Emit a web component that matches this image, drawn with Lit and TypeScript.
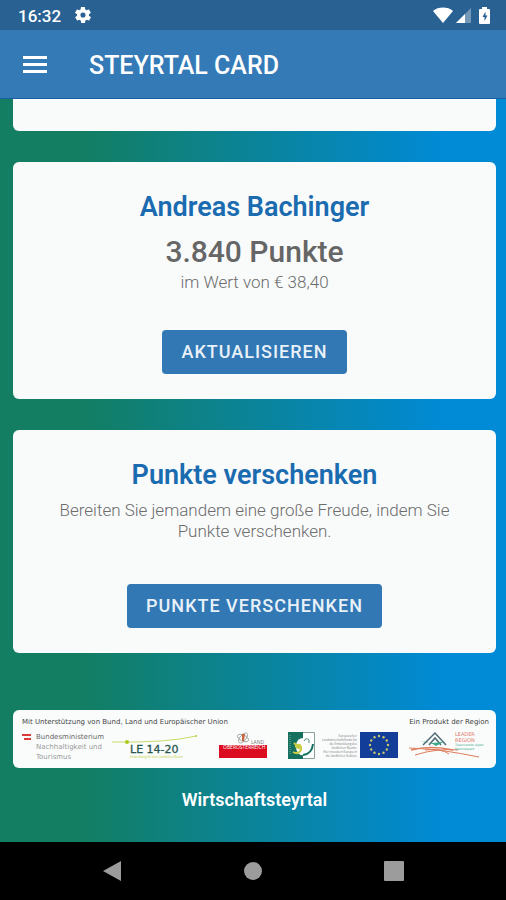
import { LitElement, html, svg, css } from "lit";
import { customElement } from "lit/decorators.js";

@customElement("status-bar")
class StatusBar extends LitElement {
  static styles = css`
    :host {
      display: flex;
      align-items: center;
      height: 30px;
      padding: 0 16px 0 18px;
      background: #286192;
      color: #fff;
      font: 500 17px/30px Roboto, sans-serif;
    }
    .time { padding-top: 2px; }
    .gear { margin-left: 14px; }
    .right { display: flex; align-items: center; margin-left: auto; }
    svg { display: block; }
    .battery { margin-left: 8px; }
    .signal { margin-left: 3px; }
  `;
  render() {
    return html`
      <span class="time">16:32</span>
      <svg class="gear" width="16" height="16" viewBox="2 2 20 20" fill="#fff">
        <path d="M19.4 13c0-.3.1-.6.1-1s0-.7-.1-1l2.1-1.600c.2-.2.3-.4.1-.6l-2-3.500c-.1-.2-.4-.3-.6-.2l-2.500 1c-.5-.4-1.100-.7-1.700-1l-.4-2.600c0-.3-.2-.5-.5-.5h-4c-.3 0-.5.2-.5.5l-.4 2.600c-.6.3-1.200.6-1.700 1l-2.500-1c-.2-.1-.5 0-.6.2l-2 3.500c-.1.2-.1.5.1.6L4.600 11c0 .3-.1.7-.1 1s0 .7.1 1l-2.100 1.600c-.2.2-.3.4-.1.600l2 3.500c.1.200.4.300.6.200l2.500-1c.5.400 1.100.7 1.700 1l.4 2.600c0 .3.200.5.5.5h4c.3 0 .5-.2.5-.5l.4-2.600c.6-.3 1.200-.6 1.700-1l2.500 1c.2.100.5 0 .6-.2l2-3.500c.1-.2.1-.5-.1-.6L19.400 13zM12 15.200a3.200 3.200 0 1 1 0-6.400 3.200 3.200 0 0 1 0 6.400z" />
      </svg>
      <span class="right">
        <svg width="20" height="16" viewBox="0 0 20 16" fill="#fff">
          <path d="M0 4C5-.6 15-.6 20 4L10 16z" />
        </svg>
        <svg class="signal" width="15" height="15" viewBox="0 0 15 15" fill="#fff">
          <path d="M15 0V15H0z" opacity=".35" />
          <path d="M9 6V15H0z" />
        </svg>
        <svg class="battery" width="11" height="17" viewBox="0 0 11 17">
          <path d="M3 0h5v2h2q1 0 1 1v13q0 1-1 1H1q-1 0-1-1V3q0-1 1-1h2z" fill="#fff" />
          <path d="M6.500 4.500L3.500 10h2v4l3-5.500h-2z" fill="#286192" />
        </svg>
      </span>
    `;
  }
}

@customElement("app-header")
class AppHeader extends LitElement {
  static styles = css`
    :host {
      display: flex;
      align-items: center;
      gap: 42px;
      height: 69px;
      padding: 0 23px;
      background: #347ab7;
      border-bottom: 1px solid #1b5fa0;
      box-sizing: border-box;
    }
    .menu { display: block; padding: 0; border: 0; background: none; }
    .menu svg { display: block; }
    h1 {
      margin: 0;
      color: #fff;
      font: 500 25px/30px Roboto, sans-serif;
      padding-top: 4px;
    }
  `;
  render() {
    return html`
      <button class="menu" aria-label="Menü">
        <svg width="24" height="17" viewBox="0 0 24 17" fill="#fff">
          <path d="M0 0h24v3H0zM0 7h24v3H0zM0 14h24v3H0z" />
        </svg>
      </button>
      <h1>STEYRTAL CARD</h1>
    `;
  }
}

@customElement("sponsor-banner")
class SponsorBanner extends LitElement {
  static styles = css`
    :host {
      display: block;
      height: 58px;
      border-radius: 6px;
      background: #fafcfc;
      color: #444;
      font: 400 7px/10px "DejaVu Sans", sans-serif;
      box-sizing: border-box;
      padding: 7px 7px 0 9px;
    }
    .captions { display: flex; justify-content: space-between; }
    .logos { display: flex; align-items: flex-start; margin-top: 5px; }
    svg { display: block; overflow: visible; }
    .ministry { display: flex; gap: 5px; color: #999; text-align: left; }
    .ministry svg { margin-top: 2px; }
    .ministry strong { color: #666; font-weight: 400; }
    .rural { margin-left: 8px; }
    .land, .leaf { margin-left: 21px; }
    .fund {
      display: flex;
      flex-direction: column;
      align-items: flex-end;
      width: 36px;
      margin: 2px 3px 0 6px;
      color: #777;
      font: 400 3px/4px "Open Sans", sans-serif;
      white-space: nowrap;
    }
    .leader { margin-left: auto; }
  `;
  render() {
    const stars = Array.from({ length: 12 }, (_, i) => {
      const a = (i * Math.PI) / 6;
      return { x: 19 + 9 * Math.sin(a), y: 13 - 9 * Math.cos(a) };
    });
    return html`
      <div class="captions">
        <span>Mit Unterstützung von Bund, Land und Europäischer Union</span>
        <span>Ein Produkt der Region</span>
      </div>
      <div class="logos">
        <div class="ministry">
          <svg width="9" height="7" viewBox="0 0 9 7" fill="#dc3b35">
            <path d="M0 0h9v2H0zM2 4h7v2H2z" />
          </svg>
          <span><strong>Bundesministerium</strong><br />Nachhaltigkeit und<br />Tourismus</span>
        </div>
        <svg class="rural" width="86" height="27" viewBox="0 0 86 27">
          <path d="M0 10Q55 11 84 4" fill="none" stroke="#cbd96a" stroke-width="1" />
          <circle cx="15" cy="10" r="2" fill="#a9c916" />
          <circle cx="84" cy="4" r="1" fill="#b9d23e" />
          <text x="18" y="21" font-family="DejaVu Sans" font-size="11" fill="#28584c" stroke="#28584c" stroke-width=".3">LE 14-20</text>
          <text x="18" y="26" font-family="Open Sans" font-size="3" fill="#bdcf2d">Entwicklung für den Ländlichen Raum</text>
        </svg>
        <svg class="land" width="48" height="26" viewBox="0 0 48 26">
          <path d="M0 13h48v13H0z" fill="#dc0c20" />
          <g fill="none" stroke="#999" stroke-width=".8">
            <ellipse cx="24" cy="6" rx="6" ry="3" transform="rotate(25 24 6)" />
            <ellipse cx="24" cy="6" rx="6" ry="3" transform="rotate(-50 24 6)" />
          </g>
          <path d="M23 2h3l-1 7h-2z" fill="#c96640" />
          <text x="32" y="12" font-family="Open Sans" font-size="5" fill="#777">LAND</text>
          <text x="4" y="17" font-family="Open Sans" font-size="5" fill="#fff">OBERÖSTERREICH</text>
        </svg>
        <svg class="leaf" width="27" height="27" viewBox="0 0 27 27">
          <path d="M.5.5h26v26H.5z" fill="#fff" stroke="#8ca19b" />
          <path d="M0 0h15v27H0z" fill="#16705f" />
          <path d="M15 6C8 6 6 15 10 21q3 3 5 2z" fill="#fff" />
          <path d="M15 23q9-1 10-11" fill="none" stroke="#16705f" stroke-width="2" />
          <path d="M5 20q5 3 8-2 1-6-4-5-4 2 5 4M6 11l6 5" fill="none" stroke="#c6cd45" stroke-width="2" />
          <path d="M16 9q2-4 5-1v3" fill="none" stroke="#478d7d" />
          <path d="M2 3v20" stroke="#75a99d" stroke-dasharray="1 1" />
        </svg>
        <div class="fund">
          <span>Europäischer</span><span>Landwirtschaftsfonds für</span><span>die Entwicklung des</span><span>ländlichen Raums:</span><span>Hier investiert Europa in</span><span>die ländlichen Gebiete</span>
        </div>
        <svg width="38" height="26" viewBox="0 0 38 26">
          <path d="M0 0h38v26H0z" fill="#123d98" />
          ${stars.map((s) => svg`<circle cx=${s.x} cy=${s.y} r="1.2" fill="#c9c76a" />`)}
        </svg>
        <svg class="leader" width="80" height="27" viewBox="0 0 80 27">
          <path d="M14 13L26 1l11 12M20 13l6-7 6 7" fill="none" stroke="#506b76" stroke-width="1.5" />
          <path d="M12 9q11 4 24 0l-9 5q-5-4-15-5" fill="#3aa98a" />
          <g fill="none" stroke="#df7d5c">
            <path d="M2 18q20-5 42 0" stroke-width="1.5" />
            <path d="M0 16q22 1 36 3T70 25" />
            <path d="M6 23q22-7 43-5M16 18q16-2 24 4" />
          </g>
          <g font-family="DejaVu Sans">
            <text x="46" y="4" font-size="5" fill="#df7768">LEADER</text>
            <text x="46" y="10" font-size="5" fill="#df7768">REGION</text>
            <text x="46" y="14" font-size="3" fill="#3aa98a">Traunviertler Alpen</text>
            <text x="46" y="18" font-size="3" fill="#3aa98a">Nationalpark</text>
          </g>
        </svg>
      </div>
    `;
  }
}

@customElement("app-root")
class AppRoot extends LitElement {
  static styles = css`
    :host {
      display: flex;
      flex-direction: column;
      min-height: 100vh;
      font-family: Roboto, sans-serif;
      background: #000;
    }
    main {
      flex: 1;
      padding: 0 10px 0 13px;
      background: linear-gradient(90deg, #137e62 16%, #018ad6 88%);
      text-align: center;
    }
    .card {
      border-radius: 6px;
      background: #f9fbfb;
      margin-bottom: 31px;
      padding: 28px 24px 25px;
      color: #6c6c6c;
      font-size: 17px;
      line-height: 21px;
      font-weight: 300;
    }
    .cut { height: 32px; padding: 0; border-radius: 0 0 6px 6px; }
    h2 {
      margin: 0;
      color: #1a6bb0;
      font-size: 27px;
      line-height: 34px;
      font-weight: 600;
    }
    p { margin: 0; }
    .points { margin-top: 8px; color: #666; font-size: 30px; line-height: 40px; font-weight: 500; }
    .intro { margin: 8px 0 42px; }
    .worth { margin-bottom: 37px; }
    .action {
      display: inline-block;
      height: 44px;
      padding: 0 19px;
      border: 0;
      border-radius: 4px;
      background: #3178b5;
      color: #e9f1f8;
      font: 500 18px/44px Roboto, sans-serif;
      letter-spacing: 1px;
      vertical-align: top;
    }
    .give { margin-bottom: 57px; }
    .site {
      display: inline-block;
      margin: 21px 0 30px;
      color: #fff;
      font-size: 18px;
      line-height: 22px;
      font-weight: 600;
      text-decoration: none;
    }
    nav {
      display: flex;
      justify-content: space-around;
      align-items: center;
      height: 58px;
      padding: 0 42px;
    }
    nav button { display: block; padding: 0; border: 0; background: none; }
    nav svg { display: block; }
  `;
  render() {
    return html`
      <status-bar></status-bar>
      <app-header></app-header>
      <main>
        <section class="card cut"></section>
        <section class="card">
          <h2>Andreas Bachinger</h2>
          <p class="points">3.840 Punkte</p>
          <p class="worth">im Wert von € 38,40</p>
          <button class="action">AKTUALISIEREN</button>
        </section>
        <section class="card give">
          <h2>Punkte verschenken</h2>
          <p class="intro">Bereiten Sie jemandem eine große Freude, indem Sie Punkte verschenken.</p>
          <button class="action">PUNKTE VERSCHENKEN</button>
        </section>
        <sponsor-banner></sponsor-banner>
        <a class="site" href="#">Wirtschaftsteyrtal</a>
      </main>
      <nav>
        <button aria-label="Zurück">
          <svg width="20" height="22" viewBox="0 0 20 22"><path d="M19 1v20L1 11z" fill="#9c9c9c" /></svg>
        </button>
        <button aria-label="Startseite">
          <svg width="20" height="20" viewBox="0 0 20 20"><circle cx="10" cy="10" r="9" fill="#9c9c9c" /></svg>
        </button>
        <button aria-label="Übersicht">
          <svg width="20" height="20" viewBox="0 0 20 20"><rect width="20" height="20" rx="1" fill="#9c9c9c" /></svg>
        </button>
      </nav>
    `;
  }
}
